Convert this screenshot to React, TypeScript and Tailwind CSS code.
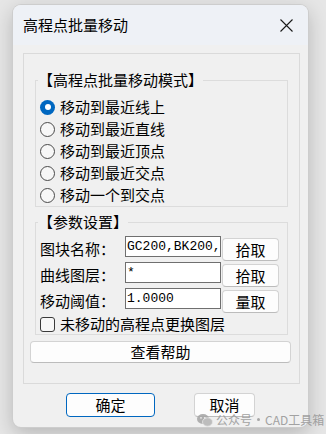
import React from "react";

const cjk = { fontFamily: '"Noto Sans CJK SC", "Noto Sans", sans-serif' };
const mono = { fontFamily: '"Liberation Mono", "DejaVu Sans Mono", monospace' };

function Radio({ checked, label }: { checked?: boolean; label: string }) {
  return (
    <div className="flex items-center h-[22px]">
      {checked ? (
        <span className="w-[15px] h-[15px] rounded-full bg-[#0067c0] flex items-center justify-center">
          <span className="w-[6px] h-[6px] rounded-full bg-white" />
        </span>
      ) : (
        <span className="w-[15px] h-[15px] rounded-full border border-[#4a4a4a] bg-[#f7f7f7]" />
      )}
      <span className="ml-[5px] text-[15px] leading-[18px] text-black">{label}</span>
    </div>
  );
}

function Btn({ children, className }: { children: React.ReactNode; className: string }) {
  return (
    <div
      className={
        "flex items-center justify-center rounded-[4px] border border-[#d3d3d3] border-b-[#bcbcbc] bg-[#fdfdfd] text-[15px] leading-[18px] text-black " +
        className
      }
    >
      {children}
    </div>
  );
}

function Row({ label, value, btn }: { label: string; value: string; btn: string }) {
  return (
    <div className="flex items-start h-[26px]">
      <div className="w-[85px] h-[21px] flex items-center text-[15px] leading-[18px] mt-[2px]">{label}</div>
      <div
        className="w-[96px] h-[21px] border border-[#6f6f6f] bg-white flex items-center pl-[1px] text-[13px] leading-[16px] text-black overflow-hidden whitespace-nowrap"
        style={mono}
      >
        {value}
      </div>
      <Btn className="ml-[1px] mt-[2px] w-[57px] h-[23px]">{btn}</Btn>
    </div>
  );
}

export default function App() {
  return (
    <div
      className="relative w-[326px] h-[434px] overflow-hidden bg-[#e6e6e6] pt-[5px] pl-[13px]"
      style={cjk}
    >
      <div className="w-[295px] h-[422px] rounded-[8px] bg-[#f0f0f0] overflow-hidden shadow-[0_0_0_1px_#cdcdcd,0_6px_20px_rgba(0,0,0,0.22)]">
        {/* title bar */}
        <div className="h-[40px] bg-[#eef1f6] flex items-center justify-between pl-[10px] pr-[15px]">
          <span className="text-[15px] leading-[18px] text-black">高程点批量移动</span>
          <svg width="13" height="13" viewBox="0 0 13 13">
            <path d="M0.5 0.5 L12.5 12.5 M12.5 0.5 L0.5 12.5" stroke="#1a1a1a" strokeWidth="1.1" />
          </svg>
        </div>
        {/* body */}
        <div className="pt-[8px] pl-[10px] pr-[8px]">
          <div className="border border-[#dadada] pt-[17px] pl-[11px] pr-[12px] pb-[18px] h-[331px]">
            <fieldset className="border border-[#dcdcdc] w-[253px] pl-[4px] pt-[7px]">
              <legend className="text-[15px] leading-[18px] ml-[-2px] px-0">【高程点批量移动模式】</legend>
              <Radio checked label="移动到最近线上" />
              <Radio label="移动到最近直线" />
              <Radio label="移动到最近顶点" />
              <Radio label="移动到最近交点" />
              <Radio label="移动一个到交点" />
            </fieldset>
            <fieldset className="border border-[#dcdcdc] w-[253px] pl-[4px] pt-[5px] mt-[6px]">
              <legend className="text-[15px] leading-[18px] ml-[-2px] px-0">【参数设置】</legend>
              <Row label="图块名称：" value="GC200,BK200," btn="拾取" />
              <Row label="曲线图层：" value="*" btn="拾取" />
              <Row label="移动阈值：" value="1.0000" btn="量取" />
              <div className="flex items-center h-[20px]">
                <span className="w-[15px] h-[15px] rounded-[3px] border border-[#3a3a3a] bg-[#f7f7f7]" />
                <span className="ml-[5px] text-[15px] leading-[18px]">未移动的高程点更换图层</span>
              </div>
            </fieldset>
            <Btn className="mt-[6px] ml-[-5px] w-[261px] h-[22px]">查看帮助</Btn>
          </div>
          <div className="flex mt-[9px] pl-[43px]">
            <div className="w-[89px] h-[24px] rounded-[4px] border border-[#0067c0] bg-[#fdfdfd] flex items-center justify-center text-[15px] leading-[18px]">
              确定
            </div>
            <Btn className="ml-[39px] w-[61px] h-[24px]">取消</Btn>
          </div>
        </div>
      </div>
      {/* watermark */}
      <div className="absolute left-[197px] top-[412px] flex items-center whitespace-nowrap text-[12px] leading-[15px] text-[#9a9a9a] opacity-90">
        <svg width="16" height="14" viewBox="0 0 16 14">
          <ellipse cx="6" cy="6" rx="6" ry="5" fill="#a8a8a8" />
          <ellipse cx="10.5" cy="9" rx="5" ry="4.2" fill="#b8b8b8" stroke="#e6e6e6" strokeWidth="0.8" />
          <circle cx="4" cy="4.8" r="0.9" fill="#eee" />
          <circle cx="7.8" cy="4.8" r="0.9" fill="#eee" />
        </svg>
        <span className="ml-[3px]">公众号</span>
        <span className="mx-[5px] w-[3px] h-[3px] rounded-full bg-[#a0a0a0]" />
        <span>CAD工具箱</span>
      </div>
    </div>
  );
}
